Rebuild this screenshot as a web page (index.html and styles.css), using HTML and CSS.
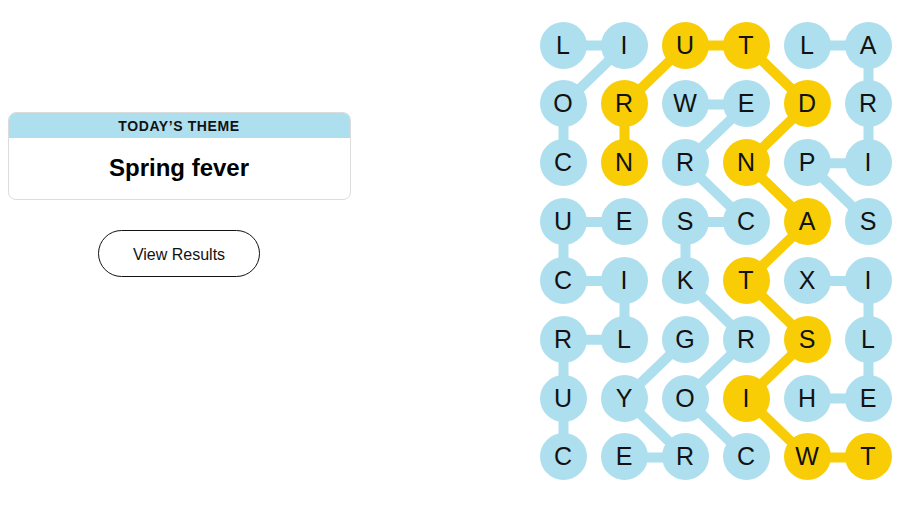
FILE: index.html
```html
<!DOCTYPE html>
<html lang="en">
<head>
<meta charset="utf-8">
<title>Strands</title>
<link rel="stylesheet" href="styles.css">
</head>
<body>
<main class="page">
  <section class="side">
    <div class="theme-card">
      <h2 class="theme-label">TODAY’S THEME</h2>
      <p class="theme-name">Spring fever</p>
    </div>
    <button class="results-btn">View Results</button>
  </section>
  <section class="board">
    <svg class="links" width="352" height="459" viewBox="0 0 352 459">
      <g fill="none" stroke-width="10" stroke-linejoin="round" stroke-linecap="round">
        <polyline class="blue" points="23.5,141.2 23.5,82.4 84.5,23.5 23.5,23.5"/>
        <polyline class="blue" points="328.5,200.1 267.5,141.2 328.5,141.2 328.5,82.4 328.5,23.5 267.5,23.5"/>
        <polyline class="blue" points="206.5,435.5 145.5,376.6 206.5,317.8 145.5,258.9 145.5,200.1 206.5,200.1 145.5,141.2 206.5,82.4 145.5,82.4"/>
        <polyline class="blue" points="23.5,435.5 23.5,376.6 23.5,317.8 84.5,317.8 84.5,258.9 23.5,258.9 23.5,200.1 84.5,200.1"/>
        <polyline class="blue" points="145.5,317.8 84.5,376.6 145.5,435.5 84.5,435.5"/>
        <polyline class="blue" points="267.5,376.6 328.5,376.6 328.5,317.8 328.5,258.9 267.5,258.9"/>
        <polyline class="yellow" points="328.5,435.5 267.5,435.5 206.5,376.6 267.5,317.8 206.5,258.9 267.5,200.1 206.5,141.2 267.5,82.4 206.5,23.5 145.5,23.5 84.5,82.4 84.5,141.2"/>
      </g>
    </svg>
    <div class="grid">
      <span class="cell">L</span><span class="cell">I</span><span class="cell spangram">U</span><span class="cell spangram">T</span><span class="cell">L</span><span class="cell">A</span>
      <span class="cell">O</span><span class="cell spangram">R</span><span class="cell">W</span><span class="cell">E</span><span class="cell spangram">D</span><span class="cell">R</span>
      <span class="cell">C</span><span class="cell spangram">N</span><span class="cell">R</span><span class="cell spangram">N</span><span class="cell">P</span><span class="cell">I</span>
      <span class="cell">U</span><span class="cell">E</span><span class="cell">S</span><span class="cell">C</span><span class="cell spangram">A</span><span class="cell">S</span>
      <span class="cell">C</span><span class="cell">I</span><span class="cell">K</span><span class="cell spangram">T</span><span class="cell">X</span><span class="cell">I</span>
      <span class="cell">R</span><span class="cell">L</span><span class="cell">G</span><span class="cell">R</span><span class="cell spangram">S</span><span class="cell">L</span>
      <span class="cell">U</span><span class="cell">Y</span><span class="cell">O</span><span class="cell spangram">I</span><span class="cell">H</span><span class="cell">E</span>
      <span class="cell">C</span><span class="cell">E</span><span class="cell">R</span><span class="cell">C</span><span class="cell spangram">W</span><span class="cell spangram">T</span>
    </div>
  </section>
</main>
</body>
</html>
```
FILE: styles.css
```css
html, body {
  margin: 0;
  padding: 0;
  background: #ffffff;
}

body {
  font-family: "Liberation Sans", Arial, sans-serif;
  color: #121212;
  width: 900px;
  height: 506px;
  overflow: hidden;
}

.page {
  display: flex;
  align-items: flex-start;
}

.side {
  width: 343px;
  margin-left: 7.5px;
  margin-top: 111.5px;
}

.theme-card {
  border: 1px solid #dcdcdc;
  border-radius: 8px;
  overflow: hidden;
  background: #fff;
}

.theme-label {
  margin: 0;
  height: 25px;
  line-height: 26px;
  background: #aedfee;
  text-align: center;
  font-size: 14px;
  font-weight: 700;
  letter-spacing: 0.6px;
  color: #121212;
}

.theme-name {
  margin: 0;
  height: 61px;
  line-height: 60px;
  text-align: center;
  font-size: 24px;
  font-weight: 700;
  color: #000;
}

.results-btn {
  display: block;
  margin: 30px auto 0;
  width: 162px;
  height: 47px;
  border: 1px solid #121212;
  border-radius: 24px;
  background: #fff;
  font-family: "Liberation Sans", Arial, sans-serif;
  font-size: 16px;
  color: #121212;
  padding: 3px 0 0;
}

.board {
  position: relative;
  margin-left: auto;
  margin-right: 8.5px;
  margin-top: 21.5px;
  width: 352px;
  height: 459px;
}

.links {
  position: absolute;
  left: 0;
  top: 0;
}

.blue {
  stroke: #aedfee;
}

.yellow {
  stroke: #f8cd05;
}

.grid {
  position: relative;
  display: grid;
  grid-template-columns: repeat(6, 47px);
  grid-auto-rows: 47px;
  column-gap: 14px;
  row-gap: 11.857px;
}

.cell {
  display: flex;
  align-items: center;
  justify-content: center;
  border-radius: 50%;
  background: #aedfee;
  font-size: 25px;
  color: #121212;
}

.cell.spangram {
  background: #f8cd05;
}
```
